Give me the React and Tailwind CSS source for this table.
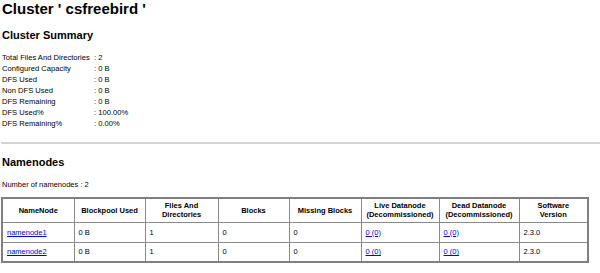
import React from "react";

const summary = [
  ["Total Files And Directories", "2"],
  ["Configured Capacity", "0 B"],
  ["DFS Used", "0 B"],
  ["Non DFS Used", "0 B"],
  ["DFS Remaining", "0 B"],
  ["DFS Used%", "100.00%"],
  ["DFS Remaining%", "0.00%"],
];

const nodes = [
  { name: "namenode1", used: "0 B", files: "1", blocks: "0", missing: "0", live: "0 (0)", dead: "0 (0)", version: "2.3.0" },
  { name: "namenode2", used: "0 B", files: "1", blocks: "0", missing: "0", live: "0 (0)", dead: "0 (0)", version: "2.3.0" },
];

export default function App() {
  return (
    <div className="w-[600px] h-[273px] overflow-hidden bg-white text-black font-['Liberation_Sans',Arial,sans-serif]">
      {/* Header + summary */}
      <div className="px-[2px]">
        <h1 className="text-[15px] font-bold leading-[18px]">Cluster ' csfreebird '</h1>
        <h2 className="mt-[10px] text-[11px] font-bold leading-[14px]">Cluster Summary</h2>
        <div className="mt-[10px] grid grid-cols-[92px_auto] text-[7.6px] leading-[11px]">
          {summary.map(([label, value]) => (
            <React.Fragment key={label}>
              <div className="whitespace-nowrap">{label}</div>
              <div>: {value}</div>
            </React.Fragment>
          ))}
        </div>
      </div>

      <hr className="mt-[13px] ml-[1px] border-t-2 border-[#d4d4d4]" />

      {/* Namenodes */}
      <div className="px-[2px]">
        <h2 className="mt-[11px] text-[11px] font-bold leading-[14px]">Namenodes</h2>
        <div className="mt-[10px] text-[7.5px] leading-[11px]">Number of namenodes : 2</div>
        <table className="mt-[7px] ml-[-1px] w-[588px] border-collapse border-2 border-[#808080] text-[7.5px] leading-[9px]">
          <thead>
            <tr className="h-[24px] font-bold">
              <th className="w-[72px] border border-[#8a8a8a]">NameNode</th>
              <th className="w-[71px] border border-[#8a8a8a]">Blockpool Used</th>
              <th className="w-[73px] border border-[#8a8a8a]">Files And<br />Directories</th>
              <th className="w-[71px] border border-[#8a8a8a]">Blocks</th>
              <th className="w-[72px] border border-[#8a8a8a]">Missing Blocks</th>
              <th className="w-[78px] border border-[#8a8a8a]">Live Datanode<br />(Decommissioned)</th>
              <th className="w-[80px] border border-[#8a8a8a]">Dead Datanode<br />(Decommissioned)</th>
              <th className="border border-[#8a8a8a]">Software<br />Version</th>
            </tr>
          </thead>
          <tbody>
            {nodes.map((n) => (
              <tr key={n.name} className="h-[20px]">
                <td className="border border-[#8a8a8a] pl-[4px]">
                  <a href="#" className="text-[#0000ee] underline">{n.name}</a>
                </td>
                <td className="border border-[#8a8a8a] pl-[4px]">{n.used}</td>
                <td className="border border-[#8a8a8a] pl-[4px]">{n.files}</td>
                <td className="border border-[#8a8a8a] pl-[4px]">{n.blocks}</td>
                <td className="border border-[#8a8a8a] pl-[4px]">{n.missing}</td>
                <td className="border border-[#8a8a8a] pl-[4px]">
                  <a href="#" className="text-[#0000ee] underline">{n.live}</a>
                </td>
                <td className="border border-[#8a8a8a] pl-[4px]">
                  <a href="#" className="text-[#0000ee] underline">{n.dead}</a>
                </td>
                <td className="border border-[#8a8a8a] pl-[4px]">{n.version}</td>
              </tr>
            ))}
          </tbody>
        </table>
      </div>
    </div>
  );
}
